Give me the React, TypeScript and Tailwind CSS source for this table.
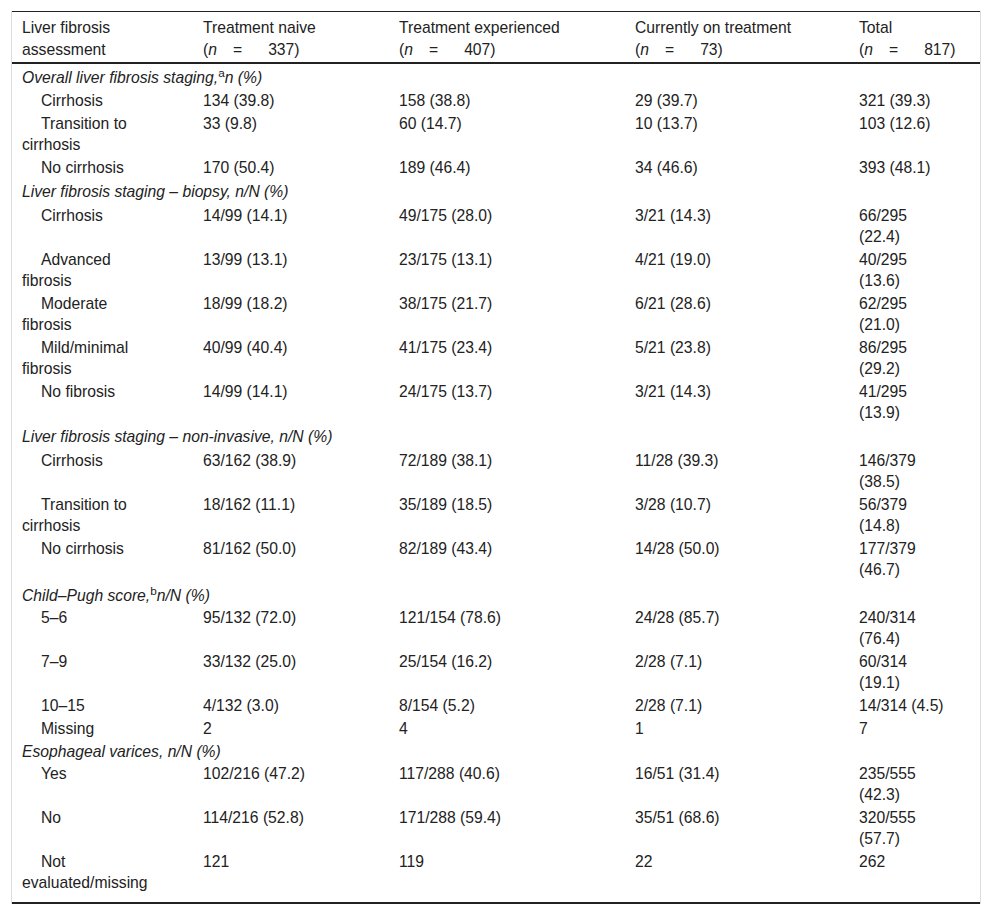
import type { ReactNode } from "react";

type Row = [string, string, string, string, string];

const sections: { title: ReactNode; pad: string; rows: Row[] }[] = [
  {
    title: (
      <>
        Overall liver fibrosis staging,<sup className="not-italic">a</sup>n (%)
      </>
    ),
    pad: "pt-[3px] pb-px",
    rows: [
      ["Cirrhosis", "134 (39.8)", "158 (38.8)", "29 (39.7)", "321 (39.3)"],
      ["Transition to cirrhosis", "33 (9.8)", "60 (14.7)", "10 (13.7)", "103 (12.6)"],
      ["No cirrhosis", "170 (50.4)", "189 (46.4)", "34 (46.6)", "393 (48.1)"],
    ],
  },
  {
    title: "Liver fibrosis staging – biopsy, n/N (%)",
    pad: "py-[2px]",
    rows: [
      ["Cirrhosis", "14/99 (14.1)", "49/175 (28.0)", "3/21 (14.3)", "66/295 (22.4)"],
      ["Advanced fibrosis", "13/99 (13.1)", "23/175 (13.1)", "4/21 (19.0)", "40/295 (13.6)"],
      ["Moderate fibrosis", "18/99 (18.2)", "38/175 (21.7)", "6/21 (28.6)", "62/295 (21.0)"],
      ["Mild/minimal fibrosis", "40/99 (40.4)", "41/175 (23.4)", "5/21 (23.8)", "86/295 (29.2)"],
      ["No fibrosis", "14/99 (14.1)", "24/175 (13.7)", "3/21 (14.3)", "41/295 (13.9)"],
    ],
  },
  {
    title: "Liver fibrosis staging – non-invasive, n/N (%)",
    pad: "py-[2px]",
    rows: [
      ["Cirrhosis", "63/162 (38.9)", "72/189 (38.1)", "11/28 (39.3)", "146/379 (38.5)"],
      ["Transition to cirrhosis", "18/162 (11.1)", "35/189 (18.5)", "3/28 (10.7)", "56/379 (14.8)"],
      ["No cirrhosis", "81/162 (50.0)", "82/189 (43.4)", "14/28 (50.0)", "177/379 (46.7)"],
    ],
  },
  {
    title: (
      <>
        Child–Pugh score,<sup className="not-italic">b</sup>n/N (%)
      </>
    ),
    pad: "pt-[4px] pb-0",
    rows: [
      ["5–6", "95/132 (72.0)", "121/154 (78.6)", "24/28 (85.7)", "240/314 (76.4)"],
      ["7–9", "33/132 (25.0)", "25/154 (16.2)", "2/28 (7.1)", "60/314 (19.1)"],
      ["10–15", "4/132 (3.0)", "8/154 (5.2)", "2/28 (7.1)", "14/314 (4.5)"],
      ["Missing", "2", "4", "1", "7"],
    ],
  },
  {
    title: "Esophageal varices, n/N (%)",
    pad: "pt-px pb-0",
    rows: [
      ["Yes", "102/216 (47.2)", "117/288 (40.6)", "16/51 (31.4)", "235/555 (42.3)"],
      ["No", "114/216 (52.8)", "171/288 (59.4)", "35/51 (68.6)", "320/555 (57.7)"],
      ["Not evaluated/missing", "121", "119", "22", "262"],
    ],
  },
];

const groups = [
  { label: "Treatment naive", n: "337" },
  { label: "Treatment experienced", n: "407" },
  { label: "Currently on treatment", n: "73" },
  { label: "Total", n: "817" },
];

function Count({ n }: { n: string }) {
  return (
    <>
      (<i>n</i>
      <span className="ml-[16px]">=</span>
      <span className="ml-[26px]">{n})</span>
    </>
  );
}

export default function App() {
  return (
    <div className="min-h-screen bg-white pt-[11px] pl-[11px] font-['Liberation_Sans',Arial,sans-serif] text-[15.7px] text-[#222]">
      <div className="w-[970px] border-x border-[#dcdcdc]">
        <table className="w-full table-fixed border-collapse border-t border-b-2 border-[#222]">
          <colgroup>
            <col className="w-[180px]" />
            <col className="w-[196px]" />
            <col className="w-[236px]" />
            <col className="w-[224px]" />
            <col className="w-[132px]" />
          </colgroup>
          <thead>
            <tr className="border-b-2 border-[#222]">
              <th className="pl-[10px] pr-[38px] pt-[5px] pb-[1px] text-left align-top font-normal leading-[22px]">
                Liver fibrosis assessment
              </th>
              {groups.map((g, i) => (
                <th
                  key={g.label}
                  className={`pl-[11px] pt-[5px] pb-[1px] text-left align-top font-normal leading-[22px] ${i === 3 ? "pr-[32px]" : "pr-[11px]"}`}
                >
                  {g.label}
                  <br />
                  <Count n={g.n} />
                </th>
              ))}
            </tr>
          </thead>
          <tbody>
            {sections.map((s, si) => (
              <>
                <tr key={`h${si}`}>
                  <td colSpan={5} className={`pl-[10px] italic leading-[21px] ${s.pad}`}>
                    {s.title}
                  </td>
                </tr>
                {s.rows.map((r, ri) => {
                  const last = si === sections.length - 1 && ri === s.rows.length - 1;
                  const pad = last ? "pt-px pb-[9px]" : "py-px";
                  return (
                    <tr key={`${si}-${ri}`}>
                      <td className={`pl-[10px] pr-[38px] indent-[19px] align-top leading-[21px] ${pad}`}>{r[0]}</td>
                      <td className={`pl-[11px] pr-[11px] align-top leading-[21px] ${pad}`}>{r[1]}</td>
                      <td className={`pl-[11px] pr-[11px] align-top leading-[21px] ${pad}`}>{r[2]}</td>
                      <td className={`pl-[11px] pr-[11px] align-top leading-[21px] ${pad}`}>{r[3]}</td>
                      <td className={`pl-[11px] pr-[32px] align-top leading-[21px] ${pad}`}>{r[4]}</td>
                    </tr>
                  );
                })}
              </>
            ))}
          </tbody>
        </table>
      </div>
    </div>
  );
}
